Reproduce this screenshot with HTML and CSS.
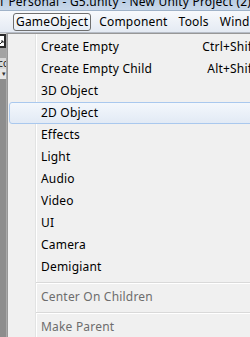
FILE: index.html
```html
<!DOCTYPE html>
<html>
<head>
<meta charset="utf-8">
<link rel="stylesheet" href="styles.css">
</head>
<body>
<div class="title"><span class="title-text">1 Personal - G5.unity - New Unity Project (2)</span></div>
<div class="menubar">
  <div class="mb-item active">GameObject</div>
  <div class="mb-item">Component</div>
  <div class="mb-item">Tools</div>
  <div class="mb-item">Window</div>
</div>
<div class="main">
  <div class="strip">
    <div class="s-top"></div>
    <div class="s-icon">
      <svg width="6" height="14" viewBox="0 0 6 14"><rect x="0" y="0" width="6" height="14" fill="#2a2a2a"/><rect x="0" y="2" width="4" height="10" fill="#fff"/><path d="M0 10 L3 7 M1 7 H3 V9" stroke="#222" stroke-width="1" fill="none"/></svg>
    </div>
    <div class="s-gray"></div>
    <div class="s-label">cc</div>
    <div class="s-drop">&#9662;</div>
    <div class="s-rest"></div>
  </div>
  <div class="menu">
    <div class="item"><span class="label">Create Empty</span><span class="sc">Ctrl+Shift+N</span></div>
    <div class="item"><span class="label">Create Empty Child</span><span class="sc">Alt+Shift+N</span></div>
    <div class="item"><span class="label">3D Object</span></div>
    <div class="item hover"><span class="label">2D Object</span></div>
    <div class="item"><span class="label">Effects</span></div>
    <div class="item"><span class="label">Light</span></div>
    <div class="item"><span class="label">Audio</span></div>
    <div class="item"><span class="label">Video</span></div>
    <div class="item"><span class="label">UI</span></div>
    <div class="item"><span class="label">Camera</span></div>
    <div class="item"><span class="label">Demigiant</span></div>
    <div class="sep"></div>
    <div class="item disabled"><span class="label">Center On Children</span></div>
    <div class="sep"></div>
    <div class="item disabled"><span class="label">Make Parent</span></div>
  </div>
</div>
</body>
</html>
```
FILE: styles.css
```css
html, body {
  margin: 0;
  padding: 0;
}
body {
  width: 250px;
  height: 337px;
  overflow: hidden;
  font-family: "Noto Sans", "Open Sans", sans-serif;
  font-size: 12px;
  letter-spacing: 0.2px;
  color: #000;
  background: #f0f0f0;
}
.title {
  height: 10px;
  overflow: hidden;
  background: linear-gradient(#b9cde4, #c9d8ea);
  border-bottom: 1px solid #9fb2c8;
}
.title-text {
  display: block;
  white-space: nowrap;
  line-height: 12px;
  margin-top: -4px;
  margin-left: -2px;
}
.menubar {
  height: 21px;
  display: flex;
  align-items: center;
  gap: 5px;
  padding-left: 13px;
  background: linear-gradient(#f7f9fc, #e4eaf3);
  border-bottom: 1px solid #b6bcc6;
  white-space: nowrap;
}
.mb-item {
  padding: 0 2px;
  height: 16px;
  line-height: 16px;
  border: 1px solid transparent;
}
.mb-item.active {
  border-color: #6f6f6f;
  border-radius: 3px;
  background: linear-gradient(#fbfcfe, #e6edf6);
}
.main {
  display: flex;
  height: 305px;
}
.strip {
  width: 6px;
  flex: none;
  display: flex;
  flex-direction: column;
  border-right: 1px solid #a9a9a9;
  background: #8d8d8d;
  overflow: hidden;
}
.s-top {
  height: 1px;
  background: #d9d9d9;
}
.s-icon {
  height: 14px;
  line-height: 0;
}
.s-gray {
  height: 10px;
  background: #a3a3a3;
}
.s-label {
  height: 11px;
  background: #d8d8d8;
  font-size: 10px;
  line-height: 11px;
  color: #222;
  overflow: hidden;
  white-space: nowrap;
  text-indent: -2px;
}
.s-drop {
  height: 10px;
  background: #e6e6e6;
  font-size: 7px;
  line-height: 10px;
  text-align: right;
  color: #333;
}
.s-rest {
  flex: 1;
}
.menu {
  flex: none;
  width: 300px;
  border-left: 1px solid #979797;
  border-top: 1px solid #979797;
  padding-top: 2px;
  background-color: #f0f0f0;
  background-image: linear-gradient(to right, transparent 27px, #e2e3e3 27px, #e2e3e3 28px, #ffffff 28px, #ffffff 29px, transparent 29px);
  white-space: nowrap;
}
.item {
  height: 22px;
  margin-left: 1px;
  display: flex;
  align-items: center;
  border: 1px solid transparent;
  border-radius: 3px;
  box-sizing: border-box;
  padding-left: 31px;
  padding-right: 34px;
  padding-bottom: 1px;
}
.item .label {
  flex: 1;
}
.item .sc {
  text-align: right;
}
.item.hover {
  border-color: #a9c8ee;
  background: linear-gradient(#f3f7fc, #e2eaf5);
}
.item.disabled {
  color: #6d6d6d;
}
.sep {
  height: 8px;
  margin-left: 28px;
  box-sizing: border-box;
  padding-top: 4px;
}
.sep::before {
  content: "";
  display: block;
  height: 1px;
  background: #d9d9d9;
  border-bottom: 1px solid #ffffff;
}
```
